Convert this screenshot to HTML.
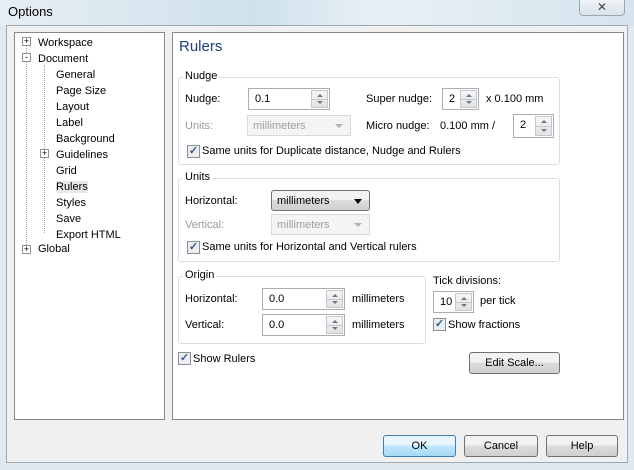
<!DOCTYPE html>
<html><head><style>
*{box-sizing:border-box;margin:0;padding:0}
body{width:634px;height:470px;overflow:hidden;position:relative;background:#dfe9f0;font-family:"Liberation Sans",sans-serif;font-size:11px;color:#000}
.a{position:absolute;white-space:nowrap}
.dis{color:#9a9a9a}
.grp{position:absolute;border:1px solid #d5dfe5;border-radius:3px}
.gl{position:absolute;background:#fff;padding:0 2px;top:-8px;left:4px}
.inp{position:absolute;border:1px solid #abadb3;background:#fff;height:22px}
.inp span{position:absolute;left:6px;top:4px}
.sp{position:absolute;right:1px;top:1px;width:17px;bottom:1px;border:1px solid #c4c7cc;background:linear-gradient(#f6f6f6,#e2e2e2)}
.sp:after{content:"";position:absolute;left:0;right:0;top:50%;border-top:1px solid #c4c7cc}
.sp:before{content:"";position:absolute;left:5px;top:3px;border-left:3px solid transparent;border-right:3px solid transparent;border-bottom:3px solid #6a7a8a}
.sp i{position:absolute;left:5px;bottom:3px;width:0;height:0;border-left:3px solid transparent;border-right:3px solid transparent;border-top:3px solid #6a7a8a}
.sel{position:absolute;border:1px solid #d9d9d9;background:#f4f4f4;height:21px;color:#a0a0a0}
.sel span{position:absolute;left:5px;top:4px}
.sel b{position:absolute;right:7px;top:8px;border-left:4px solid transparent;border-right:4px solid transparent;border-top:4px solid #b0b0b0}
.cb{position:absolute;width:13px;height:13px;border:1px solid #8f8f8f;background:#e8eef4;font-size:11px;line-height:11px;text-align:center;color:#3b5a8a;font-weight:bold}
.btn{position:absolute;border:1px solid #707070;border-radius:3px;background:linear-gradient(#f2f2f2 45%,#dcdcdc 50%,#cfcfcf);text-align:center;line-height:20px;height:22px}
.t{position:absolute;white-space:nowrap}
</style></head><body>
<div class="a" style="left:0;top:0;width:634px;height:26px;background:linear-gradient(90deg,#e6eef4,#cfe1ec 40%,#e8f0f5 60%,#d5e4ee)"></div>
<div class="a" style="left:8px;top:4px;font-size:13px">Options</div>
<div class="a" style="left:579px;top:0;width:46px;height:16px;border:1px solid #9aa8b4;border-top:none;border-radius:0 0 4px 4px;background:linear-gradient(#f0f4f8,#d8e2ea);text-align:center;font-size:12px;line-height:14px;color:#444">✕</div>
<div class="a" style="left:6px;top:25px;width:622px;height:438px;background:#f0f0f0;border:1px solid #a0a8b0"></div>
<!-- tree -->
<div class="a" style="left:14px;top:32px;width:151px;height:388px;background:#fff;border:1px solid #828790"></div>
<div class="a" style="left:26px;top:45px;height:204px;border-left:1px dotted #a0a0a0"></div>
<div class="a" style="left:44px;top:65px;height:168px;border-left:1px dotted #a0a0a0"></div>
<div class="t" style="left:38px;top:35px;line-height:16px">Workspace<br>Document</div>
<div class="t" style="left:56px;top:67px;line-height:16px">General<br>Page Size<br>Layout<br>Label<br>Background<br>Guidelines<br>Grid<br><span style="background:#e8e8e8">Rulers</span><br>Styles<br>Save<br>Export HTML</div>
<div class="t" style="left:38px;top:243px">Global</div>
<div class="a" style="left:22px;top:37px;width:9px;height:9px;border:1px solid #919191;background:#fff;font-size:9px;line-height:7px;text-align:center">+</div>
<div class="a" style="left:22px;top:53px;width:9px;height:9px;border:1px solid #919191;background:#fff;font-size:9px;line-height:7px;text-align:center">-</div>
<div class="a" style="left:40px;top:149px;width:9px;height:9px;border:1px solid #919191;background:#fff;font-size:9px;line-height:7px;text-align:center">+</div>
<div class="a" style="left:22px;top:245px;width:9px;height:9px;border:1px solid #919191;background:#fff;font-size:9px;line-height:7px;text-align:center">+</div>
<!-- right -->
<div class="a" style="left:172px;top:32px;width:452px;height:388px;background:#fff;border:1px solid #828790"></div>
<div class="t" style="left:179px;top:38px;font-size:15px;color:#1e3f78">Rulers</div>

<div class="grp" style="left:178px;top:77px;width:382px;height:88px"><div class="gl">Nudge</div></div>
<div class="t" style="left:185px;top:93px">Nudge:</div>
<div class="inp" style="left:248px;top:88px;width:82px"><span>0.1</span><div class="sp"><i></i></div></div>
<div class="t" style="left:366px;top:93px">Super nudge:</div>
<div class="inp" style="left:442px;top:88px;width:37px"><span>2</span><div class="sp"><i></i></div></div>
<div class="t" style="left:486px;top:93px">x 0.100 mm</div>
<div class="t dis" style="left:185px;top:120px">Units:</div>
<div class="sel" style="left:247px;top:115px;width:104px"><span>millimeters</span><b></b></div>
<div class="t" style="left:366px;top:120px">Micro nudge:</div>
<div class="t" style="left:440px;top:120px">0.100 mm /</div>
<div class="inp" style="left:513px;top:114px;width:41px;height:24px"><span>2</span><div class="sp"><i></i></div></div>
<div class="cb" style="left:187px;top:145px">✓</div>
<div class="t" style="left:202px;top:145px">Same units for Duplicate distance, Nudge and Rulers</div>

<div class="grp" style="left:178px;top:178px;width:382px;height:84px"><div class="gl">Units</div></div>
<div class="t" style="left:185px;top:195px">Horizontal:</div>
<div class="a" style="left:271px;top:190px;width:99px;height:21px;border:1px solid #707070;border-radius:3px;background:linear-gradient(#f2f2f2 45%,#dcdcdc 50%,#cfcfcf)"><span style="position:absolute;left:5px;top:4px">millimeters</span><b style="position:absolute;right:7px;top:8px;border-left:4px solid transparent;border-right:4px solid transparent;border-top:5px solid #000"></b></div>
<div class="t dis" style="left:185px;top:219px">Vertical:</div>
<div class="sel" style="left:271px;top:214px;width:99px"><span>millimeters</span><b></b></div>
<div class="cb" style="left:187px;top:241px">✓</div>
<div class="t" style="left:202px;top:241px">Same units for Horizontal and Vertical rulers</div>

<div class="grp" style="left:178px;top:276px;width:248px;height:68px"><div class="gl">Origin</div></div>
<div class="t" style="left:185px;top:293px">Horizontal:</div>
<div class="inp" style="left:262px;top:288px;width:83px"><span>0.0</span><div class="sp"><i></i></div></div>
<div class="t" style="left:352px;top:293px">millimeters</div>
<div class="t" style="left:185px;top:319px">Vertical:</div>
<div class="inp" style="left:262px;top:314px;width:83px"><span>0.0</span><div class="sp"><i></i></div></div>
<div class="t" style="left:352px;top:319px">millimeters</div>

<div class="t" style="left:433px;top:275px">Tick divisions:</div>
<div class="inp" style="left:433px;top:291px;width:41px"><span>10</span><div class="sp"><i></i></div></div>
<div class="t" style="left:480px;top:295px">per tick</div>
<div class="cb" style="left:433px;top:318px">✓</div>
<div class="t" style="left:448px;top:319px">Show fractions</div>
<div class="cb" style="left:178px;top:352px">✓</div>
<div class="t" style="left:193px;top:353px">Show Rulers</div>
<div class="btn" style="left:469px;top:352px;width:91px">Edit Scale...</div>

<div class="btn" style="left:383px;top:435px;width:73px;border-color:#3c7fb1;background:linear-gradient(#eaf6fd 45%,#bee6fd 50%,#a7d9f5)">OK</div>
<div class="btn" style="left:464px;top:435px;width:74px">Cancel</div>
<div class="btn" style="left:546px;top:435px;width:72px">Help</div>
</body></html>
